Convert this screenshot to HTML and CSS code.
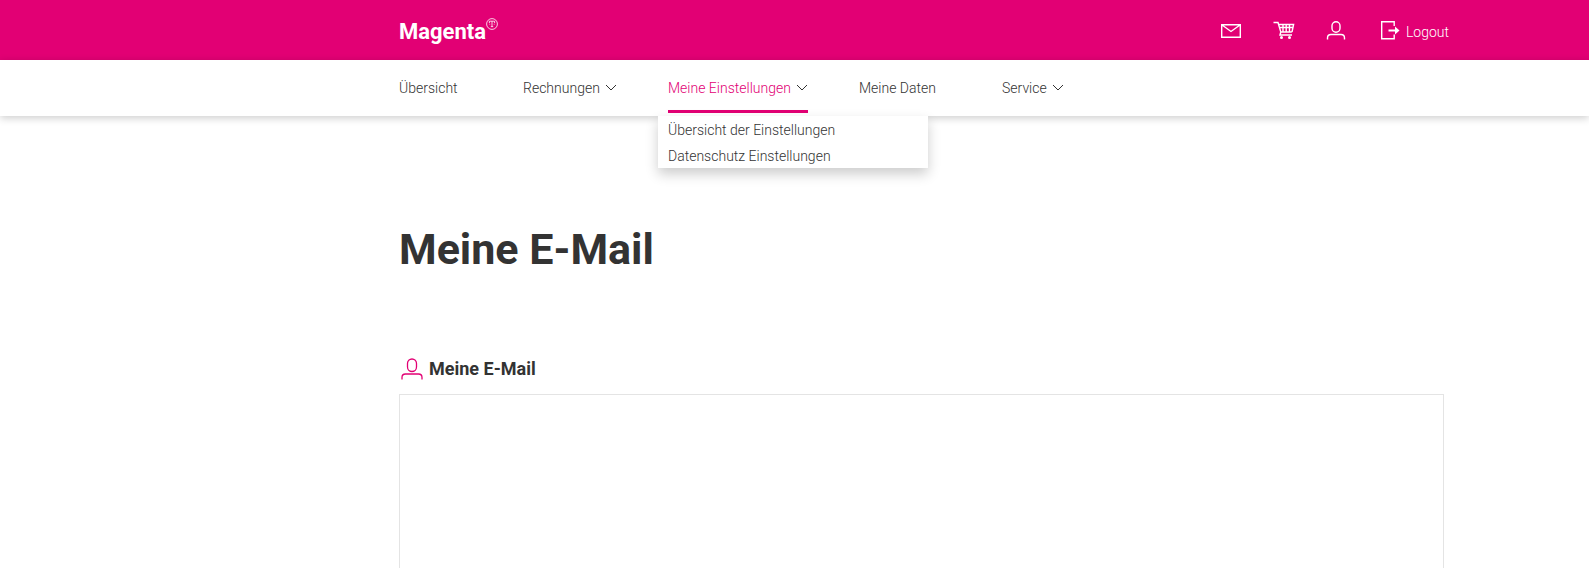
FILE: index.html
```
<!DOCTYPE html>
<html lang="de">
<head>
<meta charset="utf-8">
<meta name="viewport" content="width=device-width, initial-scale=1">
<title>Meine E-Mail</title>
<link rel="stylesheet" href="styles.css">
</head>
<body>
<header class="topbar">
  <a class="brand" href="#" aria-label="Magenta">
    <span class="brand-name">Magenta</span>
    <svg class="brand-mark" viewBox="0 0 12 12" aria-hidden="true"><circle cx="6" cy="6" r="5.4"/><path d="M3.4 5V3.2h5.2V5M6 3.2v5.3M4.8 8.6h2.4M3.4 6.2h.8M7.8 6.2h.8"/></svg>
  </a>
  <div class="tools">
    <a class="tool" href="#" aria-label="E-Mail"><svg width="22" height="20" viewBox="0 0 22 20"><path d="M1.7 4.7h18.6v12.6H1.7zM1.7 4.7 11 11.5l9.300-6.800"/></svg></a>
    <a class="tool" href="#" aria-label="Warenkorb"><svg width="22" height="20" viewBox="0 0 22 20"><path d="M.5 2.500h4.500l2.800 9.500h11M5.600 4.500h15l-1.600 7.500M6.500 7.500h13.500M10 4.500v7M13.200 4.500v7M16.500 4.500v7M7.800 12l-.8 3h12"/><circle class="solid" cx="8.500" cy="17.500" r="1.500"/><circle class="solid" cx="16.500" cy="17.500" r="1.500"/></svg></a>
    <a class="tool" href="#" aria-label="Konto"><svg width="20" height="20" viewBox="0 0 20 20"><rect x="6" y="1.700" width="8" height="10.600" rx="4"/><path d="M1.500 19.500v-1.500q0-3.500 3.500-3.500h10q3.500 0 3.500 3.500v1.500"/></svg></a>
    <a class="tool logout" href="#"><svg width="20" height="20" viewBox="0 0 20 20"><path d="M14.200 6V1.700H1.700v17h12.500V14.500"/><path class="arrow" d="M8.500 10.500h7"/><path class="solid" d="M15 6.500l4.500 4-4.500 4z"/></svg><span>Logout</span></a>
  </div>
</header>
<nav class="nav" aria-label="Hauptnavigation">
  <ul class="menu">
    <li class="item"><a class="link" href="#">Übersicht</a></li>
    <li class="item"><a class="link" href="#">Rechnungen<svg class="chevron" viewBox="0 0 12 8"><path d="M1 1l5 5 5-5"/></svg></a></li>
    <li class="item"><a class="link active" href="#" aria-current="page">Meine Einstellungen<svg class="chevron" viewBox="0 0 12 8"><path d="M1 1l5 5 5-5"/></svg></a>
      <ul class="dropdown">
        <li><a class="sublink" href="#">Übersicht der Einstellungen</a></li>
        <li><a class="sublink" href="#">Datenschutz Einstellungen</a></li>
      </ul>
    </li>
    <li class="item"><a class="link" href="#">Meine Daten</a></li>
    <li class="item"><a class="link" href="#">Service<svg class="chevron" viewBox="0 0 12 8"><path d="M1 1l5 5 5-5"/></svg></a></li>
  </ul>
</nav>
<main class="content">
  <h1 class="title">Meine E-Mail</h1>
  <section>
    <h2 class="section-title"><svg class="section-icon" viewBox="0 0 22 22" aria-hidden="true"><rect x="6.500" y="1" width="9" height="12.500" rx="4.500"/><path d="M1 21.500v-2q0-3.500 3.500-3.500h13q3.500 0 3.500 3.500v2"/></svg>Meine E-Mail</h2>
    <div class="panel"></div>
  </section>
</main>
</body>
</html>
```
FILE: styles.css
```
:root {
  --magenta: #e20074;
  --text: #333;
  --left: 399px;
  --right: 145px;
}
* { box-sizing: border-box; }
body {
  display: flex;
  flex-direction: column;
  min-height: 100vh;
  margin: 0;
  background: #fff;
  color: var(--text);
  font: 300 14px/26px Roboto, "Liberation Sans", sans-serif;
}
a { color: inherit; text-decoration: none; }
ul { margin: 0; padding: 0; list-style: none; }
svg { fill: none; stroke: currentColor; flex: none; }
.solid { fill: currentColor; stroke: none; }
.topbar {
  display: flex;
  align-items: center;
  justify-content: space-between;
  height: 60px;
  padding: 0 140px 0 var(--left);
  background: var(--magenta);
  color: #fff;
}
.brand { display: flex; align-items: flex-start; padding-top: 4px; }
.brand-name { font: bold 22px/28px Roboto, "Liberation Sans", sans-serif; }
.brand-mark { width: 12px; height: 12px; stroke-width: 0.8; }
.tools { display: flex; align-items: center; gap: 31px; }
.tool { display: flex; align-items: center; }
.tool svg { stroke-width: 1.4; }
.tool .arrow { stroke-width: 2; }
.logout { gap: 6px; margin-left: 3px; }
.logout span { padding-top: 4px; }
.nav {
  position: relative;
  height: 56px;
  padding: 0 var(--right) 0 var(--left);
  background: #fff;
  box-shadow: 0 2px 8px rgba(0, 0, 0, 0.2);
}
.menu {
  display: grid;
  grid-template-columns: 124px 145px 191px 143px auto;
  justify-content: start;
}
.item { position: relative; }
.link {
  display: inline-flex;
  align-items: center;
  gap: 5px;
  height: 53px;
  padding-top: 6px;
  border-bottom: 3px solid transparent;
  white-space: nowrap;
}
.active { color: var(--magenta); border-color: var(--magenta); }
.chevron { width: 12px; height: 8px; color: var(--text); }
.dropdown {
  position: absolute;
  top: 56px;
  left: -10px;
  width: 270px;
  padding: 0 10px;
  background: #fff;
  box-shadow: 0 6px 12px rgba(0, 0, 0, 0.2);
}
.sublink { display: block; padding-top: 2px; line-height: 24px; }
.content {
  display: flex;
  flex: 1;
  flex-direction: column;
  padding: 101px var(--right) 0 var(--left);
}
.title { margin: 0 0 74px; font: bold 43px/64px Roboto, "Liberation Sans", sans-serif; }
.content section { display: flex; flex: 1; flex-direction: column; }
.section-title {
  display: flex;
  align-items: center;
  gap: 6px;
  margin: 0 0 11px;
  padding-left: 2px;
  font: bold 18px/28px Roboto, "Liberation Sans", sans-serif;
}
.section-icon { width: 22px; height: 22px; color: var(--magenta); stroke-width: 1.3; }
.panel { flex: 1; border: 1px solid #e4e4e4; border-bottom: 0; }
```
